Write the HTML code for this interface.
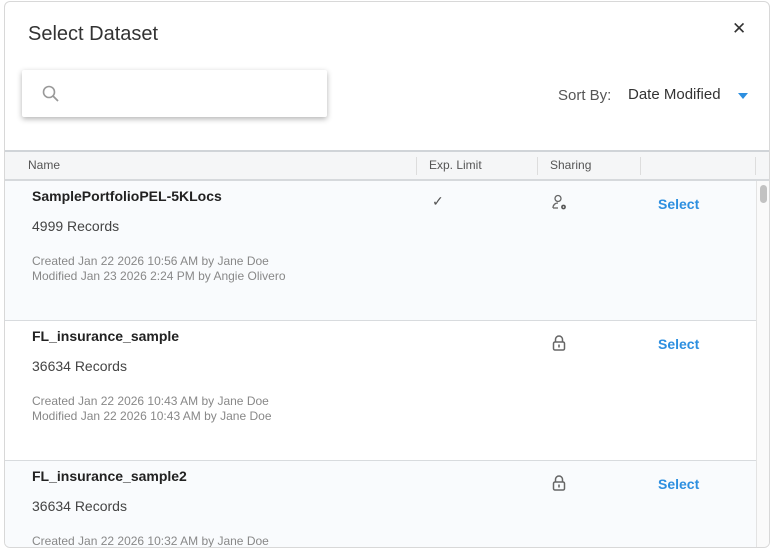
<!DOCTYPE html>
<html><head><style>
*{margin:0;padding:0;box-sizing:border-box}
html,body{width:774px;height:553px;overflow:hidden}
body{background:#fff;font-family:"Liberation Sans",sans-serif;position:relative}
.modal{position:absolute;left:4px;top:1px;width:766px;height:547px;border:1px solid #d8d8d8;border-radius:6px;overflow:hidden;background:#fff}
.a{position:absolute;white-space:nowrap}
.title{left:23px;top:21px;font-size:20px;color:#333}
.close{left:727px;top:17px;font-size:17px;color:#333}
.search{left:17px;top:68px;width:305px;height:47px;background:#fff;box-shadow:0 2px 6px rgba(0,0,0,.3);border-radius:2px}
.sortl{left:553px;top:85px;font-size:15px;color:#555}
.sortv{left:623px;top:84px;font-size:15px;color:#333}
.tri{left:733px;top:91px;width:0;height:0;border-left:5px solid transparent;border-right:5px solid transparent;border-top:6px solid #2d8fe0}
.thead{left:0;top:148px;width:766px;height:31px;background:#f5f6f7;border-top:2px solid #d0d4d8;border-bottom:2px solid #d6d9dc}
.th{top:156px;font-size:12px;color:#555}
.sep{top:155px;width:1px;height:18px;background:#ddd}
.row{left:0;width:751px;height:140px;border-bottom:1px solid #d8dbde}
.nm{font-size:14px;font-weight:bold;color:#222;left:27px}
.rec{font-size:14px;color:#444;left:27px}
.meta{font-size:12px;color:#888;left:27px;line-height:15px}
.sel{left:653px;font-size:14px;font-weight:bold;color:#2d8fe0}
.sb{left:751px;top:179px;width:15px;height:370px;background:#fafafa;border-left:1px solid #e3e3e3}
.thumb{left:755px;top:183px;width:7px;height:18px;background:#c2c2c2;border-radius:4px}
</style></head><body>
<div class="modal">
<div class="a title">Select Dataset</div>
<div class="a close">✕</div>
<div class="a search"><svg style="position:absolute;left:20px;top:15px" width="18" height="18" viewBox="0 0 18 18"><circle cx="7" cy="7" r="5.5" fill="none" stroke="#999" stroke-width="1.6"/><line x1="11" y1="11" x2="16" y2="16" stroke="#999" stroke-width="1.8"/></svg></div>
<div class="a sortl">Sort By:</div>
<div class="a sortv">Date Modified</div>
<div class="a tri"></div>
<div class="a thead"></div>
<div class="a th" style="left:23px">Name</div>
<div class="a th" style="left:424px">Exp. Limit</div>
<div class="a th" style="left:545px">Sharing</div>
<div class="a sep" style="left:411px"></div>
<div class="a sep" style="left:532px"></div>
<div class="a sep" style="left:635px"></div>
<div class="a sep" style="left:750px"></div>

<div class="a row" style="top:179px;background:#f9fbfd"></div>
<div class="a nm" style="top:186px">SamplePortfolioPEL-5KLocs</div>
<div class="a rec" style="top:216px">4999 Records</div>
<div class="a meta" style="top:252px">Created Jan 22 2026 10:56 AM by Jane Doe<br>Modified Jan 23 2026 2:24 PM by Angie Olivero</div>
<div class="a" style="left:427px;top:191px;font-size:14px;color:#555">✓</div>
<svg class="a" style="left:546px;top:192px" width="18" height="18" viewBox="0 0 18 18"><circle cx="7" cy="4.5" r="3" fill="none" stroke="#666" stroke-width="1.3"/><path d="M2 14c0-3 2-5 5-5" fill="none" stroke="#666" stroke-width="1.3"/><path d="M2 14h5" stroke="#666" stroke-width="1.3"/><circle cx="12.5" cy="13" r="2.4" fill="#555"/><circle cx="12.5" cy="13" r="0.8" fill="#fff"/></svg>
<div class="a sel" style="top:194px">Select</div>

<div class="a row" style="top:319px;background:#fff"></div>
<div class="a nm" style="top:326px">FL_insurance_sample</div>
<div class="a rec" style="top:356px">36634 Records</div>
<div class="a meta" style="top:392px">Created Jan 22 2026 10:43 AM by Jane Doe<br>Modified Jan 22 2026 10:43 AM by Jane Doe</div>
<svg class="a" style="left:546px;top:332px" width="16" height="18" viewBox="0 0 16 18"><path d="M4.5 8V5.5a3.5 3.5 0 0 1 7 0V8" fill="none" stroke="#666" stroke-width="1.5"/><rect x="2.5" y="8" width="11" height="8" rx="1.5" fill="none" stroke="#666" stroke-width="1.5"/><rect x="7.2" y="10.5" width="1.6" height="3" fill="#666"/></svg>
<div class="a sel" style="top:334px">Select</div>

<div class="a row" style="top:459px;background:#f9fbfd"></div>
<div class="a nm" style="top:466px">FL_insurance_sample2</div>
<div class="a rec" style="top:496px">36634 Records</div>
<div class="a meta" style="top:532px">Created Jan 22 2026 10:32 AM by Jane Doe</div>
<svg class="a" style="left:546px;top:472px" width="16" height="18" viewBox="0 0 16 18"><path d="M4.5 8V5.5a3.5 3.5 0 0 1 7 0V8" fill="none" stroke="#666" stroke-width="1.5"/><rect x="2.5" y="8" width="11" height="8" rx="1.5" fill="none" stroke="#666" stroke-width="1.5"/><rect x="7.2" y="10.5" width="1.6" height="3" fill="#666"/></svg>
<div class="a sel" style="top:474px">Select</div>

<div class="a sb"></div>
<div class="a thumb"></div>
</div>
</body></html>
